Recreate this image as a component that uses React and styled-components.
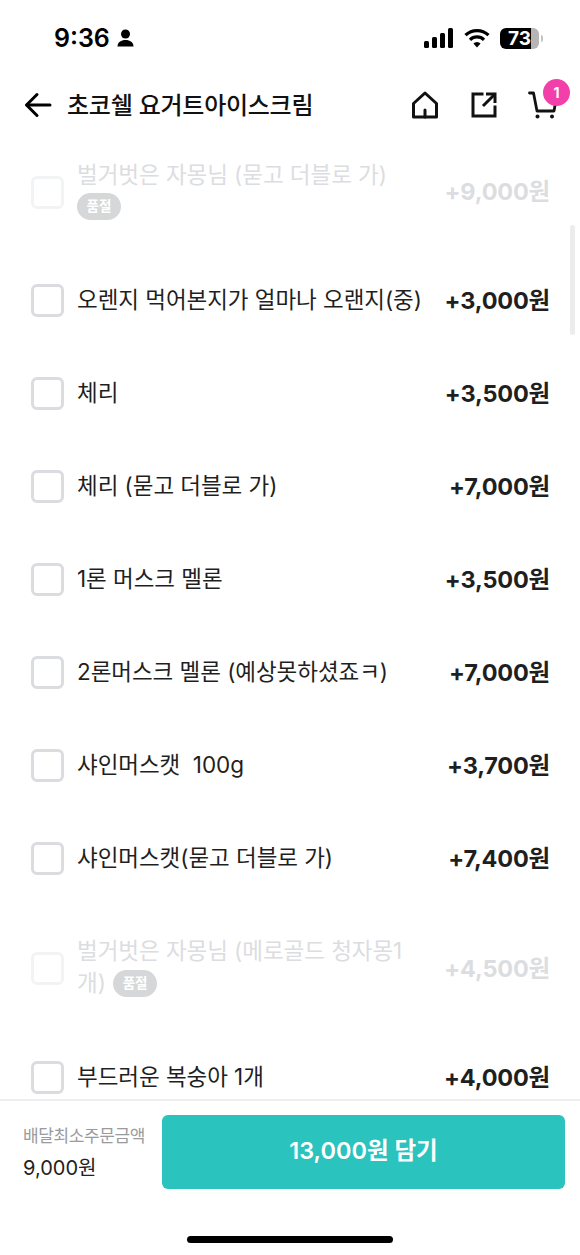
import React from 'react';
import styled, { createGlobalStyle } from 'styled-components';

const GlobalStyle = createGlobalStyle`
  html, body { margin: 0; padding: 0; background: #fff; }
  body { font-family: Inter, "Noto Sans CJK KR", sans-serif; color: #1f1f1f; }
`;

const Page = styled.div`
  width: 580px;
  height: 1255px;
  display: flex;
  flex-direction: column;
  overflow: hidden;
  position: relative;
  background: #fff;
`;

const StatusBar = styled.div`
  height: 67px;
  flex: none;
  box-sizing: border-box;
  padding: 22px 37px 0 54px;
  display: flex;
  align-items: flex-start;
  justify-content: space-between;
`;

const Clock = styled.div`
  display: flex;
  align-items: center;
  gap: 7px;
  font-size: 25px;
  line-height: 32px;
  font-weight: 600;
  color: #000;
`;

const StatusIcons = styled.div`
  display: flex;
  align-items: center;
  gap: 10px;
  height: 32px;
`;

const Battery = styled.div`
  width: 39px;
  height: 21px;
  border-radius: 6px;
  position: relative;
  overflow: hidden;
  background: linear-gradient(90deg, #000 0 80%, #b5b5b5 80% 100%);
  color: #fff;
  font-size: 19px;
  font-weight: 700;
  line-height: 21px;
  text-align: center;
`;

const BatteryTip = styled.div`
  width: 2px;
  height: 7px;
  margin-left: -8px;
  border-radius: 0 2px 2px 0;
  background: #c4c4c4;
`;

const Header = styled.div`
  height: 81px;
  flex: none;
  box-sizing: border-box;
  padding: 0 22px 6px 24px;
  display: flex;
  align-items: center;
`;

const BackButton = styled.div`
  width: 43px;
  height: 28px;
  display: flex;
  align-items: center;
`;

const Title = styled.div`
  flex: 1;
  padding-bottom: 2px;
  font-size: 24px;
  font-weight: 500;
  letter-spacing: -0.25px;
  color: #111;
`;

const HeaderIcons = styled.div`
  display: flex;
  align-items: center;
  gap: 28px;
`;

const IconBox = styled.div`
  position: relative;
  width: 31px;
  height: 32px;
  display: flex;
  align-items: center;
  justify-content: center;
`;

const Badge = styled.div`
  position: absolute;
  top: -10px;
  right: -12px;
  width: 27px;
  height: 27px;
  border-radius: 50%;
  background: #f23fa9;
  color: #fff;
  font-size: 14px;
  font-weight: 700;
  line-height: 27px;
  text-align: center;
`;

const List = styled.div`
  flex: 1;
  min-height: 0;
  overflow: hidden;
  position: relative;
`;

const Row = styled.div`
  box-sizing: border-box;
  height: ${({ $height }) => $height}px;
  padding: ${({ $pad }) => $pad};
  display: flex;
  align-items: center;
  color: ${({ $soldOut }) => ($soldOut ? '#dcdde0' : '#1f1f1f')};
`;

const Check = styled.div`
  width: 33px;
  height: 33px;
  flex: none;
  box-sizing: border-box;
  border: 3px solid ${({ $soldOut }) => ($soldOut ? '#f2f3f4' : '#dadcdf')};
  border-radius: 6px;
  margin-right: 13px;
`;

const Name = styled.div`
  flex: 1;
  min-width: 0;
  padding: 0 20px 1px 0;
  font-size: 22.5px;
  line-height: 32px;
  letter-spacing: -0.05px;
  white-space: pre-wrap;
`;

const SoldOut = styled.span`
  display: inline-block;
  width: 44px;
  height: 27px;
  margin: 0 0 4px ${({ $inline }) => ($inline ? '1px' : '0')};
  border-radius: 14px;
  background: #d6d7d9;
  color: #fff;
  font-size: 13.5px;
  font-weight: 700;
  line-height: 27px;
  letter-spacing: 0;
  text-align: center;
  vertical-align: middle;
`;

const Price = styled.div`
  flex: none;
  padding-bottom: 4px;
  font-size: 23.5px;
  font-weight: 700;
  letter-spacing: -0.2px;
`;

const ScrollThumb = styled.div`
  position: absolute;
  top: 77px;
  right: 5px;
  width: 5px;
  height: 110px;
  border-radius: 3px;
  background: #ececec;
`;

const Footer = styled.div`
  height: 156px;
  flex: none;
  box-sizing: border-box;
  border-top: 2px solid #eeeeef;
  padding: 14px 15px 0 23px;
  display: flex;
  align-items: flex-start;
`;

const MinOrder = styled.div`
  width: 139px;
  flex: none;
  padding-top: 9px;
`;

const MinLabel = styled.div`
  font-size: 17px;
  line-height: 25px;
  letter-spacing: -0.4px;
  color: #9a9b9e;
`;

const MinValue = styled.div`
  margin-top: 4px;
  font-size: 20px;
  line-height: 30px;
  color: #222;
`;

const AddButton = styled.div`
  flex: 1;
  height: 74px;
  border-radius: 6px;
  background: #2bc3bd;
  color: #fff;
  font-size: 23.5px;
  font-weight: 600;
  line-height: 72px;
  text-align: center;
`;

const HomeBar = styled.div`
  position: absolute;
  left: 187px;
  bottom: 12px;
  width: 206px;
  height: 7px;
  border-radius: 4px;
  background: #000;
`;

const PersonIcon = () => (
  <svg width="17" height="18" viewBox="0 0 17 18" fill="#000">
    <circle cx="8.5" cy="5" r="4.5" />
    <path d="M0.5 17.5c0-4.2 3.5-6.5 8-6.5s8 2.3 8 6.5z" />
  </svg>
);

const SignalIcon = () => (
  <svg width="30" height="20" viewBox="0 0 30 20" fill="#000">
    <rect x="0" y="13" width="5" height="7" rx="1.5" />
    <rect x="8" y="9" width="5" height="11" rx="1.5" />
    <rect x="16" y="5" width="5" height="15" rx="1.5" />
    <rect x="24" y="0" width="5" height="20" rx="1.5" />
  </svg>
);

const WifiIcon = () => (
  <svg width="26" height="20" viewBox="0 0 26 20" fill="none" stroke="#000" strokeWidth="3.2">
    <path d="M1.5 7.2a16.5 16.5 0 0 1 23 0" />
    <path d="M6 11.8a10 10 0 0 1 14 0" />
    <path d="M13 19.5l-3.6-4a5 5 0 0 1 7.2 0z" fill="#000" stroke="none" />
  </svg>
);

const BackIcon = () => (
  <svg width="28" height="26" viewBox="0 0 28 26" fill="none" stroke="#000" strokeWidth="3" strokeLinecap="round" strokeLinejoin="round">
    <path d="M26 13H3" />
    <path d="M13 2.5L2.5 13 13 23.5" />
  </svg>
);

const HomeIcon = () => (
  <svg width="28" height="28" viewBox="0 0 28 28" fill="none" stroke="#111" strokeWidth="3" strokeLinejoin="round" strokeLinecap="round">
    <path d="M2.5 12.5L14 2l11.5 10.5V26h-23z" />
    <path d="M14 19v7" />
  </svg>
);

const ShareIcon = () => (
  <svg width="26" height="26" viewBox="0 0 26 26" fill="none" stroke="#111" strokeWidth="3" strokeLinecap="square">
    <path d="M11 2H2v22h22v-9" />
    <path d="M13 13L23 3" />
    <path d="M15 2h9v9" strokeLinecap="butt" />
  </svg>
);

const CartIcon = () => (
  <svg width="30" height="28" viewBox="0 0 30 28" fill="none" stroke="#111" strokeWidth="2.8" strokeLinecap="round" strokeLinejoin="round">
    <path d="M1.5 2H5.5L9 20H26L28 9" />
    <circle cx="9.5" cy="25.5" r="2" fill="#111" stroke="none" />
    <circle cx="24" cy="25.5" r="2" fill="#111" stroke="none" />
  </svg>
);

const options = [
  { name: '벌거벗은 자몽님 (묻고 더블로 가)', price: '+9,000원', soldOut: true, height: 106, pad: '0 30px 18px 31px', badgeBelow: true },
  { name: '오렌지 먹어본지가 얼마나 오랜지(중)', price: '+3,000원' },
  { name: '체리', price: '+3,500원' },
  { name: '체리 (묻고 더블로 가)', price: '+7,000원' },
  { name: '1론 머스크 멜론', price: '+3,500원' },
  { name: '2론머스크 멜론 (예상못하셨죠ㅋ)', price: '+7,000원' },
  { name: '샤인머스캣  100g', price: '+3,700원' },
  { name: '샤인머스캣(묻고 더블로 가)', price: '+7,400원' },
  { name: '벌거벗은 자몽님 (메로골드 청자몽1개)', price: '+4,500원', soldOut: true, height: 126, pad: '1px 30px 0 31px', badgeInline: true },
  { name: '부드러운 복숭아 1개', price: '+4,000원' },
];

const App = () => (
  <Page>
    <GlobalStyle />
    <StatusBar>
      <Clock>
        9:36
        <PersonIcon />
      </Clock>
      <StatusIcons>
        <SignalIcon />
        <WifiIcon />
        <Battery>73</Battery>
        <BatteryTip />
      </StatusIcons>
    </StatusBar>
    <Header>
      <BackButton>
        <BackIcon />
      </BackButton>
      <Title>초코쉘 요거트아이스크림</Title>
      <HeaderIcons>
        <IconBox>
          <HomeIcon />
        </IconBox>
        <IconBox>
          <ShareIcon />
        </IconBox>
        <IconBox>
          <CartIcon />
          <Badge>1</Badge>
        </IconBox>
      </HeaderIcons>
    </Header>
    <List>
      {options.map((item) => (
        <Row
          key={item.name}
          $soldOut={item.soldOut}
          $height={item.height || 93}
          $pad={item.pad || '0 30px 0 31px'}
        >
          <Check $soldOut={item.soldOut} />
          <Name>
            {item.name}
            {item.badgeBelow && <br />}
            {item.soldOut && (
              <>
                {item.badgeInline && ' '}
                <SoldOut $inline={item.badgeInline}>품절</SoldOut>
              </>
            )}
          </Name>
          <Price>{item.price}</Price>
        </Row>
      ))}
      <ScrollThumb />
    </List>
    <Footer>
      <MinOrder>
        <MinLabel>배달최소주문금액</MinLabel>
        <MinValue>9,000원</MinValue>
      </MinOrder>
      <AddButton>13,000원 담기</AddButton>
    </Footer>
    <HomeBar />
  </Page>
);

export default App;
